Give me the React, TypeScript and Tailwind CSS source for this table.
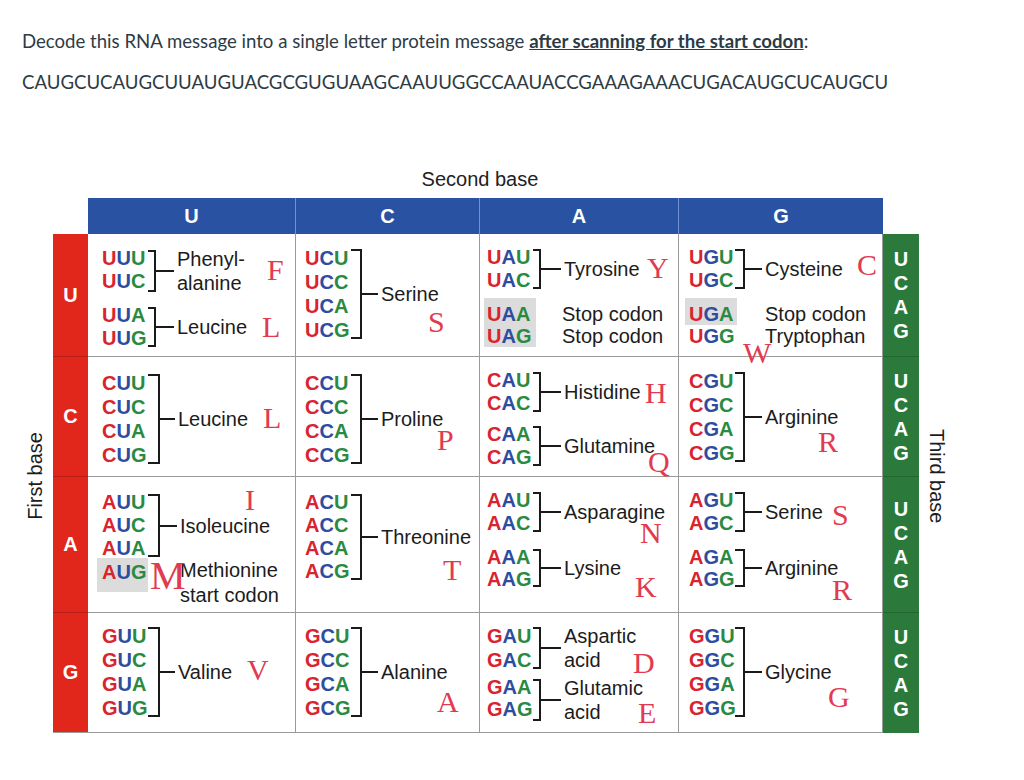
import type { ReactNode } from "react";

function Codon({ c }: { c: string }) {
  return (
    <div className="whitespace-nowrap font-bold">
      <span className="text-[#d9232e]">{c[0]}</span>
      <span className="text-[#2d4d9f]">{c[1]}</span>
      <span className="text-[#2a8a42]">{c[2]}</span>
    </div>
  );
}

function Group({
  codons,
  lead,
  arm,
  tick,
  lab = "leading-[24px]",
  children,
}: {
  codons: string[];
  lead: string;
  arm: string;
  tick: string;
  lab?: string;
  children: ReactNode;
}) {
  return (
    <div className="flex">
      <div className={`flex w-[46px] shrink-0 flex-col ${lead}`}>
        {codons.map((c) => (
          <Codon key={c} c={c} />
        ))}
      </div>
      <div className={`my-[3px] shrink-0 border-y-2 border-r-2 border-[#1a1a1a] ${arm}`} />
      <div className={`h-[2px] shrink-0 self-center bg-[#1a1a1a] ${tick}`} />
      <div className={`ml-[3px] self-center whitespace-nowrap ${lab}`}>{children}</div>
    </div>
  );
}

function Aa({ l, className }: { l: string; className: string }) {
  return (
    <span
      className={`absolute z-10 font-['Liberation_Serif',serif] text-[30px] leading-[30px] text-[#e23a4e] ${className}`}
    >
      {l}
    </span>
  );
}

function Cell({ className, children }: { className: string; children: ReactNode }) {
  return <div className={`relative border-r border-b border-[#9a9a9a] ${className}`}>{children}</div>;
}

function Head({ t, last }: { t: string; last?: boolean }) {
  return (
    <div
      className={`flex items-center justify-center bg-[#2a52a3] font-bold text-white ${
        last ? "" : "border-r border-[#7391cf]"
      }`}
    >
      {t}
    </div>
  );
}

function Side({ t, last }: { t: string; last?: boolean }) {
  return (
    <div
      className={`flex items-center justify-center border-b bg-[#e1261c] font-bold text-white ${
        last ? "border-[#9a9a9a]" : "border-[#b81d16]"
      }`}
    >
      {t}
    </div>
  );
}

function Third({ last }: { last?: boolean }) {
  return (
    <div
      className={`flex flex-col items-center justify-center border-b bg-[#2b7a3b] font-bold leading-[24px] text-white ${
        last ? "border-[#2b7a3b]" : "border-[#22652f]"
      }`}
    >
      <span>U</span>
      <span>C</span>
      <span>A</span>
      <span>G</span>
    </div>
  );
}

export default function App() {
  return (
    <div className="min-h-screen bg-white">
      <div className="px-[22px] pt-[28px] font-['Lato',sans-serif] text-[18.6px] leading-[27px] text-[#2d3b45]">
        <p>
          Decode this RNA message into a single letter protein message{" "}
          <span className="font-bold underline">after scanning for the start codon</span>:
        </p>
        <p className="mt-[14px]">CAUGCUCAUGCUUAUGUACGCGUGUAAGCAAUUGGCCAAUACCGAAAGAAACUGACAUGCUCAUGCU</p>
      </div>

      <div className="font-['Liberation_Sans',Arial,sans-serif] text-[20px] leading-[23px] text-[#1c1c1c]">
        <div className="ml-[88px] mt-[71px] w-[784px] pb-[7px] text-center leading-[24px] text-[#222]">
          Second base
        </div>

        <div className="flex">
          <div className="flex w-[53px] items-center justify-end pr-[6px] pt-[36px] pb-[15px]">
            <span className="rotate-180 [writing-mode:vertical-rl]">First base</span>
          </div>

          <div className="grid grid-cols-[35px_208px_184px_199px_204px_36px] grid-rows-[36px_123px_120px_136px_120px]">
            <div />
            <Head t="U" />
            <Head t="C" />
            <Head t="A" />
            <Head t="G" last />
            <div />

            {/* U row */}
            <Side t="U" />
            <Cell className="flex flex-col gap-[9px] pl-[14px] pt-[13px]">
              <Group codons={["UUU", "UUC"]} lead="leading-[23px]" arm="w-[8px]" tick="w-[18px]">
                Phenyl-
                <br />
                alanine
              </Group>
              <Group codons={["UUA", "UUG"]} lead="leading-[23px]" arm="w-[8px]" tick="w-[18px]">
                Leucine
              </Group>
              <Aa l="F" className="left-[179px] top-[21px]" />
              <Aa l="L" className="left-[174px] top-[78px]" />
            </Cell>
            <Cell className="flex flex-col pl-[9px] pt-[12px]">
              <Group codons={["UCU", "UCC", "UCA", "UCG"]} lead="leading-[24px]" arm="w-[11px]" tick="w-[16px]">
                Serine
              </Group>
              <Aa l="S" className="left-[132px] top-[73px]" />
            </Cell>
            <Cell className="flex flex-col gap-[6px] pl-[7px] pt-[12px]">
              <Group codons={["UAU", "UAC"]} lead="leading-[23px]" arm="w-[8px]" tick="w-[20px]">
                Tyrosine
              </Group>
              <div className="flex items-start leading-[22px]">
                <div className="-ml-[3px] flex w-[52px] flex-col bg-[#dcdcdc] pl-[3px] pt-[5px]">
                  <Codon c="UAA" />
                  <Codon c="UAG" />
                </div>
                <div className="ml-[26px] flex flex-col pt-[5px]">
                  <span>Stop codon</span>
                  <span>Stop codon</span>
                </div>
              </div>
              <Aa l="Y" className="left-[167px] top-[19px]" />
            </Cell>
            <Cell className="flex flex-col gap-[6px] pl-[10px] pt-[12px]">
              <Group codons={["UGU", "UGC"]} lead="leading-[23px]" arm="w-[10px]" tick="w-[17px]">
                Cysteine
              </Group>
              <div className="flex flex-col leading-[22px]">
                <div className="flex items-start">
                  <div className="-ml-[4px] w-[52px] bg-[#dcdcdc] pl-[4px] pt-[5px]">
                    <Codon c="UGA" />
                  </div>
                  <span className="ml-[28px] pt-[5px]">Stop codon</span>
                </div>
                <div className="flex">
                  <div className="-ml-[4px] w-[52px] pl-[4px]">
                    <Codon c="UGG" />
                  </div>
                  <span className="ml-[28px]">Tryptophan</span>
                </div>
              </div>
              <Aa l="C" className="left-[178px] top-[16px]" />
              <Aa l="W" className="left-[64px] top-[104px]" />
            </Cell>
            <Third />

            {/* C row */}
            <Side t="C" />
            <Cell className="flex flex-col pl-[14px] pt-[14px]">
              <Group codons={["CUU", "CUC", "CUA", "CUG"]} lead="leading-[24px]" arm="w-[12px]" tick="w-[15px]">
                Leucine
              </Group>
              <Aa l="L" className="left-[175px] top-[46px]" />
            </Cell>
            <Cell className="flex flex-col pl-[9px] pt-[14px]">
              <Group codons={["CCU", "CCC", "CCA", "CCG"]} lead="leading-[24px]" arm="w-[11px]" tick="w-[16px]">
                Proline
              </Group>
              <Aa l="P" className="left-[141px] top-[68px]" />
            </Cell>
            <Cell className="flex flex-col gap-[8px] pl-[7px] pt-[12px]">
              <Group codons={["CAU", "CAC"]} lead="leading-[23px]" arm="w-[8px]" tick="w-[20px]">
                Histidine
              </Group>
              <Group codons={["CAA", "CAG"]} lead="leading-[23px]" arm="w-[8px]" tick="w-[20px]">
                Glutamine
              </Group>
              <Aa l="H" className="left-[165px] top-[21px]" />
              <Aa l="Q" className="left-[168px] top-[90px]" />
            </Cell>
            <Cell className="flex flex-col pl-[10px] pt-[12px]">
              <Group codons={["CGU", "CGC", "CGA", "CGG"]} lead="leading-[24px]" arm="w-[10px]" tick="w-[17px]">
                Arginine
              </Group>
              <Aa l="R" className="left-[139px] top-[70px]" />
            </Cell>
            <Third />

            {/* A row */}
            <Side t="A" />
            <Cell className="flex flex-col pl-[14px] pt-[14px]">
              <Group codons={["AUU", "AUC", "AUA"]} lead="leading-[23px]" arm="w-[12px]" tick="w-[17px]">
                Isoleucine
              </Group>
              <div className="-mt-[2px] flex items-start">
                <div className="-ml-[5px] w-[51px] bg-[#dcdcdc] pb-[8px] pl-[5px] pt-[3px]">
                  <Codon c="AUG" />
                </div>
                <div className="ml-[32px] flex flex-col leading-[25px]">
                  <span>Methionine</span>
                  <span>start codon</span>
                </div>
              </div>
              <Aa l="I" className="left-[157px] top-[8px]" />
              <span className="absolute left-[62px] top-[79px] z-10 font-['Liberation_Serif',serif] text-[40px] leading-[40px] text-[#e23a4e]">
                M
              </span>
            </Cell>
            <Cell className="flex flex-col pl-[9px] pt-[14px]">
              <Group codons={["ACU", "ACC", "ACA", "ACG"]} lead="leading-[23px]" arm="w-[11px]" tick="w-[16px]">
                Threonine
              </Group>
              <Aa l="T" className="left-[147px] top-[78px]" />
            </Cell>
            <Cell className="flex flex-col gap-[11px] pl-[7px] pt-[12px]">
              <Group codons={["AAU", "AAC"]} lead="leading-[23px]" arm="w-[8px]" tick="w-[20px]">
                Asparagine
              </Group>
              <Group codons={["AAA", "AAG"]} lead="leading-[22px]" arm="w-[8px]" tick="w-[20px]">
                Lysine
              </Group>
              <Aa l="N" className="left-[160px] top-[41px]" />
              <Aa l="K" className="left-[155px] top-[95px]" />
            </Cell>
            <Cell className="flex flex-col gap-[11px] pl-[10px] pt-[12px]">
              <Group codons={["AGU", "AGC"]} lead="leading-[23px]" arm="w-[10px]" tick="w-[17px]">
                Serine
              </Group>
              <Group codons={["AGA", "AGG"]} lead="leading-[22px]" arm="w-[10px]" tick="w-[17px]">
                Arginine
              </Group>
              <Aa l="S" className="left-[153px] top-[23px]" />
              <Aa l="R" className="left-[153px] top-[98px]" />
            </Cell>
            <Third />

            {/* G row */}
            <Side t="G" last />
            <Cell className="flex flex-col pl-[14px] pt-[11px]">
              <Group codons={["GUU", "GUC", "GUA", "GUG"]} lead="leading-[24px]" arm="w-[12px]" tick="w-[15px]">
                Valine
              </Group>
              <Aa l="V" className="left-[159px] top-[42px]" />
            </Cell>
            <Cell className="flex flex-col pl-[9px] pt-[11px]">
              <Group codons={["GCU", "GCC", "GCA", "GCG"]} lead="leading-[24px]" arm="w-[11px]" tick="w-[16px]">
                Alanine
              </Group>
              <Aa l="A" className="left-[141px] top-[74px]" />
            </Cell>
            <Cell className="flex flex-col gap-[4px] pl-[7px] pt-[11px]">
              <Group codons={["GAU", "GAC"]} lead="leading-[24px]" arm="w-[8px]" tick="w-[20px]">
                Aspartic
                <br />
                acid
              </Group>
              <Group codons={["GAA", "GAG"]} lead="leading-[22px]" arm="w-[8px]" tick="w-[20px]">
                Glutamic
                <br />
                acid
              </Group>
              <Aa l="D" className="left-[153px] top-[35px]" />
              <Aa l="E" className="left-[158px] top-[85px]" />
            </Cell>
            <Cell className="flex flex-col pl-[10px] pt-[11px]">
              <Group codons={["GGU", "GGC", "GGA", "GGG"]} lead="leading-[24px]" arm="w-[10px]" tick="w-[17px]">
                Glycine
              </Group>
              <Aa l="G" className="left-[149px] top-[69px]" />
            </Cell>
            <Third last />
          </div>

          <div className="flex items-center pl-[6px] pt-[36px] pb-[15px]">
            <span className="[writing-mode:vertical-rl]">Third base</span>
          </div>
        </div>
      </div>
    </div>
  );
}
